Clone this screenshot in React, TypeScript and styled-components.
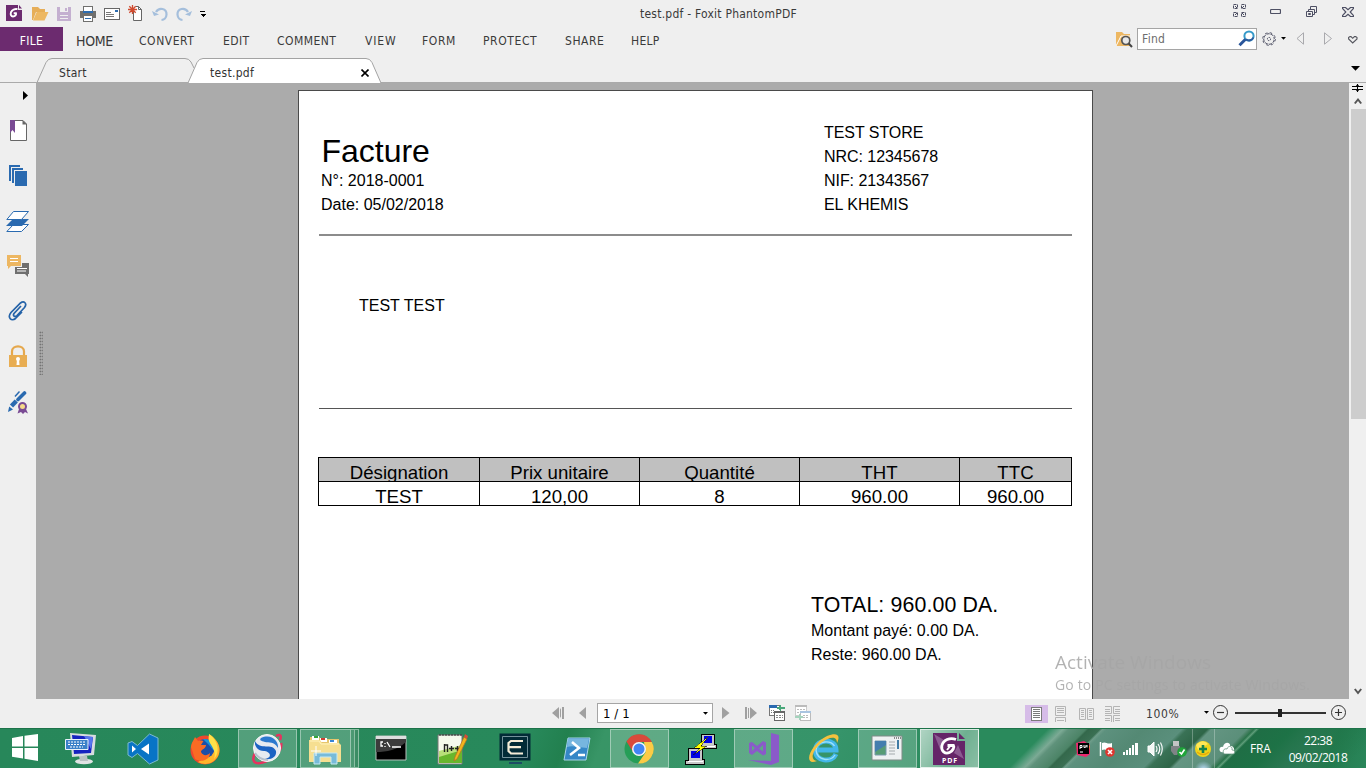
import React from 'react';
import styled, { createGlobalStyle, css } from 'styled-components';

const Global = createGlobalStyle`
  * { box-sizing: border-box; }
  html, body { margin: 0; padding: 0; overflow: hidden; }
  body { background: #efefef; }
`;

const uiFont = `"DejaVu Sans Condensed", "DejaVu Sans", sans-serif`;
const sysFont = `"Open Sans", "Noto Sans", sans-serif`;

const Window = styled.div`
  width: 1366px;
  height: 768px;
  display: flex;
  flex-direction: column;
  background: #efefef;
  font-family: ${uiFont};
  font-size: 12px;
  color: #3a3a3a;
  overflow: hidden;
`;

const Svg = styled.svg<{ $ml?: number; $mt?: number }>`
  display: block;
  flex: none;
  margin-left: ${p => p.$ml ?? 0}px;
  margin-top: ${p => p.$mt ?? 0}px;
`;

type IconProps = { w: number; h: number; ml?: number; mt?: number; crisp?: boolean; children: React.ReactNode };
const Icon = ({ w, h, ml, mt, crisp, children }: IconProps) => (
  <Svg width={w} height={h} viewBox={`0 0 ${w} ${h}`} $ml={ml} $mt={mt} fill="none"
    shapeRendering={crisp ? 'crispEdges' : undefined}>{children}</Svg>
);

/* ---------- title bar ---------- */

const TitleBar = styled.header`
  height: 27px;
  flex: none;
  display: flex;
  align-items: flex-start;
`;
const QuickTools = styled.div`
  width: 640px;
  display: flex;
  padding: 5px 0 0 6px;
`;
const Title = styled.div`
  width: 593px;
  line-height: 28px;
  letter-spacing: 0.23px;
  white-space: nowrap;
`;
const WindowButtons = styled.div`
  display: flex;
  padding-top: 4px;
`;

/* ---------- menu ---------- */

const MenuBar = styled.nav`
  height: 27px;
  flex: none;
  display: flex;
  align-items: flex-start;
`;
const FileTab = styled.div`
  width: 63px;
  height: 24px;
  background: #6c2b6f;
  color: #fff;
  text-align: center;
  line-height: 28px;
  letter-spacing: 0.3px;
`;
const MenuItem = styled.div<{ $gap: number; $w: number; $big?: boolean; $ls?: number }>`
  margin-left: ${p => p.$gap}px;
  width: ${p => p.$w}px;
  line-height: 28px;
  font-size: ${p => (p.$big ? 14 : 12)}px;
  letter-spacing: ${p => p.$ls ?? 0}px;
  white-space: nowrap;
`;
const SearchTools = styled.div`
  margin-left: auto;
  display: flex;
  width: 252px;
`;
const FindBox = styled.div`
  margin: 1px 0 0 4px;
  width: 120px;
  height: 22px;
  border: 1px solid #a5a5a5;
  background: #fff;
  display: flex;
  align-items: flex-start;
  padding-left: 4px;
  line-height: 20px;
  color: #6d6d6d;
  letter-spacing: 0.3px;
  justify-content: space-between;
`;

/* ---------- document tabs ---------- */

const TabStrip = styled.div`
  height: 29px;
  flex: none;
  display: flex;
  border-bottom: 1px solid #aaa;
  padding-left: 37px;
`;
const TabShape = styled.div<{ $w: number; $overlap?: boolean }>`
  position: relative;
  width: ${p => p.$w}px;
  height: 29px;
  margin-left: ${p => (p.$overlap ? -6 : 0)}px;
  flex: none;
  line-height: 38px;
  padding-left: 22px;
  color: #333;
  display: flex;
  z-index: ${p => (p.$overlap ? 1 : 0)};
  letter-spacing: 0.3px;
`;
const TabOutline = styled.svg`
  position: absolute;
  left: 0;
  top: 0;
`;
const TabText = styled.span`
  position: relative;
  flex: none;
  width: 47px;
`;
const CloseMark = styled.div`
  position: relative;
`;
const TabMenu = styled.div`
  margin: 12px 6px 0 auto;
`;

/* ---------- body ---------- */

const Body = styled.main`
  height: 616px;
  flex: none;
  display: flex;
`;
const Sidebar = styled.aside`
  width: 36px;
  display: flex;
  flex-direction: column;
`;
const Canvas = styled.section`
  width: 1313px;
  background: #ababab;
  display: flex;
  padding-left: 3px;
  overflow: hidden;
`;
const Grip = styled.div`
  width: 4px;
  height: 44px;
  margin: 248px 255px 0 0;
  background-image: radial-gradient(#6a6a6a 0.8px, transparent 0.9px);
  background-size: 2.6px 3px;
`;
const Sheet = styled.article`
  width: 795px;
  height: 620px;
  margin-top: 7px;
  background: #fff;
  border: 1px solid #4a4a4a;
  border-bottom: 0;
  padding: 0 20px 0 20px;
  font-family: "Liberation Sans", Arial, sans-serif;
  font-size: 16px;
  line-height: 24px;
  color: #000;
`;
const SheetHead = styled.div`
  height: 145px;
  border-bottom: 2px solid #8c8c8c;
  display: flex;
  justify-content: space-between;
  padding: 30px 0 0 2px;
`;
const Heading = styled.h1`
  margin: 12px 0 -1px 0.4px;
  font-size: 32px;
  font-weight: 400;
  line-height: 37px;
`;
const Store = styled.div`
  width: 248px;
  letter-spacing: -0.05px;
`;
const Client = styled.div`
  height: 173px;
  border-bottom: 1px solid #555;
  padding: 58px 0 0 40px;
`;
const Invoice = styled.div`
  margin-top: 48px;
  display: grid;
  grid-template-columns: 161px 160px 160px 160px 112px;
  width: 754px;
  border: 1px solid #000;
  border-right: 0;
  border-bottom: 0;
  margin-left: -1px;
`;
const Cell = styled.div<{ $head?: boolean }>`
  height: 24px;
  border-right: 1px solid #000;
  border-bottom: 1px solid #000;
  background: ${p => (p.$head ? '#c0c0c0' : '#fff')};
  font-size: 18.67px;
  line-height: 29px;
  text-align: center;
`;
const Totals = styled.div`
  margin: 86px 0 0 492px;
`;
const Total = styled.div`
  font-size: 21.33px;
  line-height: 27px;
  letter-spacing: 0.12px;
`;
const ScrollBar = styled.div`
  width: 17px;
  display: flex;
  flex-direction: column;
  align-items: center;
  background: #f0f0f0;
`;
const Thumb = styled.div`
  width: 15px;
  height: 310px;
  background: #cdcdcd;
  margin: 4px 0 auto 1px;
`;
const Watermark = styled.div`
  position: absolute;
  left: 1055px;
  top: 649px;
  font-family: ${sysFont};
  color: transparent;
  background: linear-gradient(90deg, #b2b2b2 37px, #a6a6a6 37px);
  background-clip: text;
  -webkit-background-clip: text;
  font-size: 14px;
  line-height: 18px;
  letter-spacing: 0.15px;
  white-space: nowrap;
`;
const WatermarkTitle = styled.div`
  font-size: 19px;
  line-height: 27px;
  letter-spacing: 0;
`;

/* ---------- status bar ---------- */

const StatusBar = styled.footer`
  height: 29px;
  flex: none;
  display: flex;
  padding-left: 552px;
`;
const PageBox = styled.div`
  width: 116px;
  height: 20px;
  margin: 4px 0 0 11px;
  border: 1px solid #a5a5a5;
  background: #fff;
  display: flex;
  justify-content: space-between;
  padding: 0 4px 0 5px;
  line-height: 19px;
  font-size: 13px;
  letter-spacing: 0.1px;
  color: #000;
`;
const ViewButton = styled.div<{ $on?: boolean; $ml: number }>`
  width: ${p => (p.$on ? 23 : 16)}px;
  height: 18px;
  margin: 6px 0 0 ${p => p.$ml}px;
  background: ${p => (p.$on ? '#d6bce8' : 'transparent')};
  display: flex;
  justify-content: center;
`;
const Zoom = styled.div`
  margin-left: 26px;
  width: 57px;
  line-height: 30px;
  letter-spacing: 0.6px;
`;

/* ---------- taskbar ---------- */

const Taskbar = styled.div`
  height: 40px;
  flex: none;
  display: flex;
  align-items: stretch;
  color: #fff;
  font-family: ${sysFont};
  border-top: 1px solid #1d7349;
  background:
    linear-gradient(135deg, transparent 0 62px, #4f9a78 67px, #7caa95 73px, #5f927b 77px, #4c8467 89px, #34684b 91px, #3a6f53 99px, #6d9c89 101px, #5d917e 104px, #548974 130px, #5a8f7c 157px, #3a7256 161px, #2e6547 175px, #649582 178px, #5b8f7a 203px, #3f7d5c 206px, #2a744b 208px, #5c9c78 210px, #1f6e45 212px, #1d7246 235px, #27835700 300px) 960px 0 / 406px 40px no-repeat,
    linear-gradient(110deg, #27875a 0, #28895b 500px, #22804f 535px, #389566 570px, #36946a 790px, #2a8a5c 910px, #2a8a5c 1080px, #46836b 1090px, #46836b 1220px, #247c4f 1260px, #2a865a 100%);
`;
const Start = styled.div`
  width: 50px;
  padding: 5px 0 0 12px;
`;
const TaskSlot = styled.div`
  width: 62px;
  padding: 0 1.5px;
`;
const TaskButton = styled.div<{ $state?: 'open' | 'active'; $stack?: boolean }>`
  height: 39px;
  width: ${p => (p.$stack ? 51 : 59)}px;
  display: flex;
  justify-content: center;
  align-items: center;
  border: 1px solid transparent;
  ${p => p.$state && css`
    background: ${p.$state === 'active' ? 'linear-gradient(120deg, rgba(255,255,255,.62), rgba(255,255,255,.32) 60%, rgba(255,255,255,.45))' : 'rgba(255, 255, 255, 0.2)'};
    border-color: rgba(255, 255, 255, ${p.$state === 'active' ? 0.7 : 0.4});
  `}
  ${p => p.$stack && css`
    box-shadow: 4px 0 0 -1px #4b9872, 4px 0 0 0 #8abea3, 8px 0 0 -1px #3b8c64, 8px 0 0 0 #8abea3;
  `}
`;
const Tray = styled.div`
  margin-left: auto;
  width: 291px;
  display: flex;
  align-items: flex-start;
`;
const TraySeparated = styled.div`
  width: 23px;
  height: 39px;
  margin-left: 5px;
  padding: 13px 0 0 2px;
  border-left: 1px solid rgba(255, 255, 255, 0.28);
  border-right: 1px solid rgba(255, 255, 255, 0.28);
  background: radial-gradient(circle at 50% 105%, #c4e0ff 0, rgba(170, 205, 230, 0.4) 6px, transparent 9px);
`;
const Lang = styled.div`
  margin-left: 15px;
  width: 34px;
  font-size: 12px;
  line-height: 40px;
  letter-spacing: -0.2px;
`;
const Clock = styled.div`
  width: 68px;
  text-align: center;
  font-size: 12px;
  line-height: 17px;
  letter-spacing: -0.5px;
  padding-top: 3px;
`;

const Down = ({ ml = 0, mt = 0, w = 5 }: { ml?: number; mt?: number; w?: number }) => (
  <Icon w={w} h={Math.ceil(w / 2)} ml={ml} mt={mt}><path d={`M0 0H${w}L${w / 2} ${w / 2 + 0.3}Z`} fill="#000" /></Icon>
);

const QuickAccess = () => (
  <QuickTools>
    <Icon w={17} h={17}>
      <path d="M0 0H12V5H16V16H0Z" fill="#6c2b6f" /><path d="M13 0L16 3.5H13Z" fill="#6c2b6f" />
      <path d="M11.5 4.2C9 3.6 6 4.8 5 7.2C4.2 9.5 5 11.5 7 11.5C9.3 11.5 10.4 9.6 10 8.2H7.7" stroke="#fff" strokeWidth="1.9" />
    </Icon>
    <Icon w={17} h={16} ml={9} mt={1}>
      <path d="M0 1H6L8 3H13V6H4L1 14H0Z" fill="#e6ae58" /><path d="M4.7 6H16.5L12.5 14.5H1Z" fill="#edb863" />
    </Icon>
    <Icon w={14} h={15} ml={8} mt={2} crisp>
      <path d="M0 0H14V14H0Z" fill="#c4b0d0" /><path d="M3 0H11V5H3Z" fill="#efefef" /><path d="M8 1H10V4H8ZM3 8H11V13H3Z" fill="#c4b0d0" />
      <path d="M3 8H11V9H3ZM3 11H11V12H3Z" fill="#efefef" />
    </Icon>
    <Icon w={16} h={16} ml={9} mt={1} crisp>
      <path d="M3 0H13V5H3Z" fill="#70706e" /><path d="M4 1H12V5H4Z" fill="#fff" /><path d="M0 5H16V12H0Z" fill="#70706e" />
      <path d="M3 5H13V7H3Z" fill="#2d6db0" /><path d="M3 10H13V16H3Z" fill="#70706e" /><path d="M4 10H12V15H4Z" fill="#fff" /><path d="M5 12H11V13H5Z" fill="#2d6db0" />
    </Icon>
    <Icon w={16} h={14} ml={8} mt={2} crisp>
      <path d="M.5 1.5H15.5V12.5H.5Z" fill="#fff" stroke="#666" /><path d="M2 5H7M2 7.5H10M2 9.5H10" stroke="#777" /><path d="M11 3H14V5H11Z" fill="#2d6db0" />
    </Icon>
    <Icon w={15} h={16} ml={8} mt={0}>
      <path d="M5.5 4.5V15.5H13.5V4.5L10.5 1.5H8" fill="#fff" stroke="#666" /><path d="M10.5 1.5V4.5H13.5" stroke="#666" />
      <path d="M4.5 0V9M0 4.5H9M1.3 1.3L7.7 7.7M7.7 1.3L1.3 7.7" stroke="#d04a2e" strokeWidth="1.3" />
    </Icon>
    <Icon w={16} h={16} ml={9} mt={1}>
      <path d="M4 6C7 .8 14.8 2.3 14.5 8.5C14.4 11.8 12 13.8 9.5 14" stroke="#a5bfdc" strokeWidth="2.2" /><path d="M0 5L7 8.5L2 10Z" fill="#a5bfdc" />
    </Icon>
    <Icon w={16} h={16} ml={8} mt={1}>
      <path d="M12 6C9 .8 1.2 2.3 1.5 8.5C1.6 11.8 4 13.8 6.5 14" stroke="#a5bfdc" strokeWidth="2.2" /><path d="M16 5L9 8.5L14 10Z" fill="#a5bfdc" />
    </Icon>
    <Icon w={6} h={6} ml={8} mt={6} crisp><path d="M0 0H5V1H0ZM0 3H6L3 6Z" fill="#000" /></Icon>
  </QuickTools>
);

const ink = '#4e5064';

const Controls = () => (
  <WindowButtons>
    <Icon w={14} h={14}>
      {[[0, 0], [8, 0], [0, 8], [8, 8]].map(([x, y]) => <path key={`${x}${y}`} d={`M${x + .5} ${y + .5}h4v4h-4z`} stroke={ink} strokeDasharray="3 1" />)}
      <path d="M2 2L4 4M11 2L9 4M2 11L4 9M11 11L9 9" stroke={ink} />
    </Icon>
    <Icon w={11} h={5} ml={23} mt={5}><rect x=".5" y=".5" width="10" height="4" rx="1" stroke={ink} strokeWidth="1.2" /></Icon>
    <Icon w={12} h={12} ml={25} mt={2}>
      <path d="M.5 5.5H6.5V10.5H.5ZM2.5 7.5H4.5V8.5H2.5ZM2.5 5V3.5H8.5V8.5H7M4.5 3V.5H10.5V6.5H9" stroke={ink} />
    </Icon>
    <Icon w={12} h={10} ml={24} mt={3}>
      <path d="M.5 .5H3.5L6 2.7L8.5 .5H11.5V1.5L8.2 5L11.5 8.5V9.5H8.5L6 7.3L3.5 9.5H.5V8.5L3.8 5L.5 1.5Z" stroke={ink} strokeWidth="1.2" />
    </Icon>
  </WindowButtons>
);

const menu: [string, number, number, boolean?, number?][] = [
  ['HOME', 13, 37, true, -0.3], ['CONVERT', 26, 55, false, 0.55], ['EDIT', 29, 26, false, 0.4], ['COMMENT', 28, 60, false, 0.45],
  ['VIEW', 28, 31, false, 0.85], ['FORM', 26, 34, false, 0.6], ['PROTECT', 27, 54, false, 0.6], ['SHARE', 28, 39, false, 0.55], ['HELP', 27, 28, false, 0.3],
];

const Menu = () => (
  <MenuBar>
    <FileTab>FILE</FileTab>
    {menu.map(([t, gap, w, big, ls]) => <MenuItem key={t} $gap={gap} $w={w} $big={big} $ls={ls}>{t}</MenuItem>)}
    <SearchTools>
      <Icon w={17} h={16} ml={2} mt={5}>
        <path d="M0 0H6L8 2H14V14H0Z" fill="#edb762" /><path d="M0 14L5 4H14" stroke="#fff" strokeWidth="1" />
        <circle cx="9.8" cy="8.5" r="4" fill="#e8e8e8" stroke="#555" strokeWidth="1.7" /><path d="M12.7 11.5L16 15" stroke="#444" strokeWidth="2" />
      </Icon>
      <FindBox>
        Find
        <Icon w={18} h={17} mt={1}>
          <circle cx="11" cy="6" r="4.6" stroke="#359ac9" strokeWidth="2" /><path d="M15.3 7.5A4.6 4.6 0 0 1 8 9.3" stroke="#2c5a9c" strokeWidth="2" /><path d="M7.5 9.3L1.5 15.2" stroke="#29559a" strokeWidth="3" />
        </Icon>
      </FindBox>
      <Icon w={14} h={14} ml={5} mt={5}>
        <circle cx="7" cy="7" r="5.3" stroke={ink} /><circle cx="7" cy="7" r="6.3" stroke={ink} strokeDasharray="2.5 2.45" /><circle cx="7" cy="7" r="5.3" stroke="#efefef" strokeWidth="1.4" strokeDasharray="1 3.16" /><circle cx="7" cy="7" r="1.6" stroke={ink} strokeDasharray="1.5 .7" />
      </Icon>
      <Down ml={5} mt={10} />
      <Icon w={9} h={13} ml={10} mt={5}><path d="M7.5 .8V12.2L1 6.5Z" stroke="#a9a9ad" /></Icon>
      <Icon w={9} h={13} ml={19} mt={5}><path d="M.5 .8V12.2L7.5 6.5Z" stroke="#a9a9ad" /></Icon>
      <Icon w={10} h={8} ml={15} mt={9}><path d="M.6 1.5L2 .6H3L4.7 2.3L6.4 .6H7.7L9 1.6V3L4.7 7L.6 3Z" stroke="#55565e" strokeWidth="1.1" /></Icon>
    </SearchTools>
  </MenuBar>
);

const Tabs = () => (
  <TabStrip>
    <TabShape $w={157}>
      <TabOutline width="160" height="29" fill="none"><path d="M0 28.5L9 8.5Q11 4.5 15 4.5H148Q152 4.5 154 8L157 14" stroke="#a3a3a3" /></TabOutline>
      <TabText>Start</TabText>
    </TabShape>
    <TabShape $w={194} $overlap>
      <TabOutline width="194" height="29" fill="none"><path d="M0 29L9 8.5Q11 4.5 15 4.5H178Q182 4.5 184 8.5L193 29" fill="#fff" stroke="#a3a3a3" /></TabOutline>
      <TabText>test.pdf</TabText>
      <CloseMark><Icon w={8} h={8} ml={104} mt={15}><path d="M.5 .5L7.5 7.5M7.5 .5L.5 7.5" stroke="#000" strokeWidth="1.6" /></Icon></CloseMark>
    </TabShape>
    <TabMenu><Down w={9} /></TabMenu>
  </TabStrip>
);

const blue = '#2a6ab0';

const Side = () => (
  <Sidebar>
    <Icon w={5} h={9} ml={23} mt={8}><path d="M0 0L5 4.5L0 9Z" fill="#000" /></Icon>
    <Icon w={18} h={22} ml={9} mt={19}>
      <path d="M1.5 1.5H14L17.5 5V21.5H1.5Z" fill="#fff" stroke="#666" /><path d="M13.5 1V5.5H18Z" fill="#666" /><path d="M1 1H6V14L3.5 11L1 14Z" fill="#7a4b94" />
    </Icon>
    <Icon w={20} h={22} ml={8} mt={24} crisp>
      <path d="M1 0H12V2H3V16H1Z" fill={blue} /><path d="M4 3H15V5H6V18H4Z" fill={blue} /><path d="M7 6H19V21H7Z" fill={blue} />
    </Icon>
    <Icon w={24} h={22} ml={6} mt={24}>
      <path d="M7.5 13.5H22.5L15.5 20.5H.8Z" fill="#fff" stroke={blue} /><path d="M7 8H23L16 15H0Z" fill={blue} /><path d="M7.5 .5H22.5L15.5 8.5H.8Z" fill="#fff" stroke={blue} />
    </Icon>
    <Icon w={23} h={23} ml={7} mt={21}>
      <path d="M0 1H14V12H4L1 15V12H0Z" fill="#edb762" /><path d="M3 4.5H11M3 7.5H11" stroke="#fff" /><path d="M15 9H22V20H21V23L18 20H8V13H15Z" fill="#6f6f6f" /><path d="M10 14.5H20M10 17H19" stroke="#fff" />
    </Icon>
    <Icon w={22} h={22} ml={7} mt={23}>
      <path d="M14 6L7 13.5C5.5 16 8 17.5 10 15.5L17.5 7.5C20.5 3.5 17 .3 13.5 3L4 12.5C0 17.5 4.5 22 8.5 18.5L15 12" stroke="#2563a8" strokeWidth="1.7" />
    </Icon>
    <Icon w={18} h={23} ml={9} mt={23}>
      <path d="M3 11V6.5C3 -.4 15 -.4 15 6.5V11" stroke="#e5a84d" strokeWidth="2.2" /><path d="M0 10H18V22H0Z" fill="#e8ad52" /><circle cx="9" cy="14" r="2" fill="#fff" /><path d="M8 14H10L10.5 20H7.5Z" fill="#fff" />
    </Icon>
    <Icon w={22} h={23} ml={7} mt={23}>
      <path d="M17.5 2L11 8.5" stroke={blue} strokeWidth="3.6" strokeLinecap="round" /><path d="M12.5 .5L8 5.5" stroke={blue} strokeWidth="1.5" /><path d="M9.3 10L4.5 15" stroke={blue} strokeWidth="4.4" /><path d="M1 21L2.2 15.5L6 18.5Z" fill={blue} />
      <path d="M12 18L10.5 22.5L14 21L16 23L18 21L21 22.5L19 18" fill="#7a4b94" /><circle cx="15.5" cy="15.5" r="3.5" fill="#f6da89" stroke="#7a4b94" strokeWidth="2" />
    </Icon>
  </Sidebar>
);

const rows = [['Désignation', 'Prix unitaire', 'Quantité', 'THT', 'TTC'], ['TEST', '120,00', '8', '960.00', '960.00']];

const Document = () => (
  <Sheet>
    <SheetHead>
      <div><Heading>Facture</Heading><div>N°: 2018-0001</div><div>Date: 05/02/2018</div></div>
      <Store><div>TEST STORE</div><div>NRC: 12345678</div><div>NIF: 21343567</div><div>EL KHEMIS</div></Store>
    </SheetHead>
    <Client><div>TEST TEST</div></Client>
    <Invoice>{rows.map((r, i) => r.map((c, j) => <Cell key={`${i}-${j}`} $head={i === 0}>{c}</Cell>))}</Invoice>
    <Totals><Total>TOTAL: 960.00 DA.</Total><div>Montant payé: 0.00 DA.</div><div>Reste: 960.00 DA.</div></Totals>
  </Sheet>
);

const PageLines = ({ x, y, w, h, c = '#b5b5b5' }: { x: number; y: number; w: number; h: number; c?: string }) => (
  <g stroke={c}><path d={`M${x + .5} ${y + .5}h${w - 1}v${h - 1}h${1 - w}z`} />
    {Array.from({ length: Math.floor((h - 3) / 2) }, (_, i) => <path key={i} d={`M${x + 2} ${y + 2.5 + i * 2}h${w - 4}`} />)}</g>
);

const Status = () => (
  <StatusBar>
    <Icon w={12} h={13} mt={8}><path d="M7 0V12L0 6ZM8 2.5L9 1V11L8 9.5ZM10 0H12V12H10Z" fill="#a0a0a0" /></Icon>
    <Icon w={7} h={13} ml={15} mt={8}><path d="M7 0V12L0 6Z" fill="#a0a0a0" /></Icon>
    <PageBox>1 / 1<Down mt={8} /></PageBox>
    <Icon w={8} h={13} ml={9} mt={8}><path d="M0 0V12L7.5 6Z" fill="#a0a0a0" /></Icon>
    <Icon w={12} h={13} ml={15} mt={8}><path d="M5 0V12L12 6ZM0 0H2V12H0ZM3 1H4V11H3Z" fill="#a0a0a0" /></Icon>
    <Icon w={17} h={17} ml={12} mt={6} crisp>
      <path d="M.5 .5H11.5V10.5H.5Z" fill="#fff" stroke="#777" /><path d="M0 0H8V3H0Z" fill={blue} /><path d="M2 5.5H6M2 7.5H6" stroke="#777" strokeDasharray="1 1" />
      <path d="M5.5 6.5H15.5V15.5H5.5Z" fill="#fff" stroke="#666" /><path d="M5 6H16V8H5Z" fill="#666" /><path d="M7 10.5H14M7 12.5H14" stroke="#888" strokeDasharray="2 1" />
      <path d="M10 2H16V4H10Z" fill="#49a77a" /><path d="M7.5 3L12 0V6Z" fill="#49a77a" />
    </Icon>
    <Icon w={17} h={17} ml={9} mt={6} crisp>
      <path d="M.5 .5H11.5V10.5H.5Z" fill="#fff" stroke="#ccc" /><path d="M0 0H12V2H0Z" fill="#bbb" /><path d="M2 4.5H10M2 7.5H6" stroke="#bbb" strokeDasharray="2 1" />
      <path d="M5.5 6.5H15.5V15.5H5.5Z" fill="#fff" stroke="#bbb" /><path d="M5 6H16V8H5Z" fill="#a9c4e0" /><path d="M8 10.5H14M8 12.5H14" stroke="#bbb" strokeDasharray="2 1" />
      <path d="M0 11H5V13H0Z" fill="#a5d3bd" /><path d="M8.5 12L4 9V15Z" fill="#a5d3bd" />
    </Icon>
    <ViewButton $on $ml={213}><Icon w={11} h={14} mt={2} crisp><path d="M0 0H11V14H0Z" fill="#fff" /><PageLines x={0} y={0} w={11} h={14} c="#7a7a7a" /></Icon></ViewButton>
    <ViewButton $ml={4}><Icon w={11} h={18}><PageLines x={0} y={1} w={11} h={10} /><path d="M.5 17V12.5H10.5V17M2 15.5H9" stroke="#b5b5b5" /></Icon></ViewButton>
    <ViewButton $ml={10}><Icon w={15} h={18}><PageLines x={0} y={3} w={7} h={12} /><PageLines x={8} y={3} w={7} h={12} /></Icon></ViewButton>
    <ViewButton $ml={10}><Icon w={15} h={18}><path d="M0 1.5H6.5V8.5H0M15 1.5H8.5V8.5H15M0 10.5H6.5V17M15 10.5H8.5V17M0 4.5H5M0 6.5H5M10 4.5H15M10 6.5H15M0 13.5H5M10 13.5H15M0 15.5H5M10 15.5H15" stroke="#b5b5b5" /></Icon></ViewButton>
    <Zoom>100%</Zoom>
    <Down mt={12} ml={1} />
    <Icon w={16} h={16} ml={4} mt={6}><circle cx="7.5" cy="7.5" r="7" stroke="#333" /><path d="M4 7.5H11" stroke="#333" strokeWidth="1.2" /></Icon>
    <Icon w={91} h={9} ml={6} mt={10} crisp><path d="M0 4H91" stroke="#333" strokeWidth="2" /><path d="M43 0H47V8H43Z" fill="#222" /></Icon>
    <Icon w={16} h={16} ml={5} mt={6}><circle cx="7.5" cy="7.5" r="7" stroke="#333" /><path d="M4 7.5H11M7.5 4V11" stroke="#333" strokeWidth="1.2" /></Icon>
  </StatusBar>
);

const SmallText = styled.text`
  font-family: ${sysFont};
  font-weight: 700;
`;

const MonitorIcon = () => (
  <Icon w={32} h={32}>
    <ellipse cx="19" cy="28.5" rx="9" ry="2.8" fill="#dfe3e3" /><path d="M14 23H22L23 28H15Z" fill="#b9c1c3" />
    <path d="M5 0L31 2L29 22L7 24Z" fill="#d7dcdf" /><path d="M7 2L28 4L26 20L9 21Z" fill="#1522c0" /><path d="M19 3L28 4L26 16Z" fill="#5677ee" />
    <path d="M.5 6.5H23V16.5H.5Z" fill="#3b80c8" stroke="#e9f2fa" /><path d="M3 9H21M3 11.5H21M5 14H18" stroke="#fff" strokeDasharray="2 1" />
  </Icon>
);
const CodeIcon = () => (
  <Icon w={32} h={32}>
    <path d="M22.5 1L31 5V27L22.5 31L10.5 20.5L5 24.5L1 22V10L5 8.5L10.5 12.5Z" fill="#0874c5" stroke="#7cbad0" /><path d="M22 10.5V21.5L14 16ZM5 12.5L9 16L5 19.5Z" fill="#fff" />
  </Icon>
);
const FirefoxIcon = () => (
  <Icon w={32} h={32}>
    <circle cx="16" cy="17" r="14.5" fill="#f0472d" /><path d="M20 1C30 7 34 18 27 26C22 32 14 32 9 29L24 20Z" fill="#ffb52b" />
    <circle cx="16" cy="15.5" r="9.5" fill="#1c4fa8" /><path d="M14 6C22 5 27 11 25 18L20 12Z" fill="#1992d8" />
    <path d="M2 14C3 8 5 7 6 4L9 8C12 7 14 8 14.5 8L12 12H17C17 16 12 16 12 19C14 23 18 23 21 20C21 27 12 30 6 26Z" fill="#fa6b24" /><path d="M20 1C30 8 31 20 25 26C28 18 22 13 20 8C19 5 20 3 20 1Z" fill="#ffe14a" />
  </Icon>
);
const SparkIcon = () => (
  <Icon w={32} h={32}>
    <path d="M25 3C29 1 31 2 29 7M4 20C-2 32 9 34 24 23C29 18 31 13 30 10" stroke="#e6335f" strokeWidth="2.5" /><circle cx="16" cy="15" r="13.5" fill="#e7eaf0" stroke="#f7f7f7" />
    <path d="M4 8C9 18 21 9 25 18C26 24 20 27 14 26C23 24 18 18 13 18C7 18 3 13 4 8Z" fill="#1c63c3" /><path d="M10 5C20 0 28 8 27 15C23 8 18 10 14 9C10 8 8 7 10 5Z" fill="#2c79ce" /><path d="M4 20C7 25 12 27 17 27" stroke="#b5becb" strokeWidth="2" />
  </Icon>
);
const ExplorerIcon = () => (
  <Icon w={32} h={32}>
    <path d="M1 4H10L12 6H30V29H1Z" fill="#e7c66d" /><path d="M3 3H10V7H3ZM11 5H18V9H11ZM20 7H28V11H20Z" fill="#fff" /><path d="M5 3H9V5H5Z" fill="#35a53b" /><path d="M12 5H16V7H12Z" fill="#cf3e30" /><path d="M21 7H25V9H21Z" fill="#3885d5" />
    <path d="M0 7H11L13 10H30L32 12V29H0Z" fill="#f6df91" /><path d="M1 8H10L12 11H30" stroke="#fff3bd" /><path d="M5 31V20H28V31H22V24H11V31Z" fill="#78bbd9" stroke="#c6e9f3" /><path d="M7 13V23M2 18H12" stroke="#fff" />
  </Icon>
);
const TerminalIcon = () => (
  <Icon w={32} h={28} mt={-2}>
    <path d="M1 2H31V26H1Z" fill="#000" stroke="#b8c0bd" /><path d="M1 2H31V5H1Z" fill="#dedede" /><path d="M1 5H31V8C22 16 12 18 1 18Z" fill="#3c3c3c" />
    <path d="M8 8H6V12H8M10 9V10M10 12V13M12 8L15 13M17 13H26" stroke="#fff" strokeWidth="1.3" />
  </Icon>
);
const NotepadIcon = () => (
  <Icon w={32} h={32}>
    <path d="M1 2H25V31H1Z" fill="#f5f9ec" stroke="#777" /><path d="M2 18L25 12V30H2Z" fill="#b9e07a" /><path d="M2 24L25 17V30H2Z" fill="#68b62d" /><path d="M2 2H25" stroke="#333" strokeDasharray="2 1" />
    <path d="M7.5 11V19M7.5 12H10.5V19M12 15.5H17M14.5 13V18M18 15.5H23M20.5 13V18" stroke="#222" strokeWidth="1.4" /><path d="M27 4L18 24L17 28L20 26L30 6Z" fill="#f2b51d" stroke="#b66d24" strokeWidth=".7" /><path d="M28 1L31 3L30 6L27 4Z" fill="#d64d38" />
  </Icon>
);
const EIcon = () => (
  <Icon w={32} h={32}>
    <path d="M1.5 1.5H30.5V26.5H1.5Z" fill="#022b37" stroke="#022b37" strokeWidth="2" /><path d="M3.5 3.5H28.5V24.5H3.5Z" stroke="#74929b" /><path d="M24 8H12L9.5 10V18L12 20.5H24M10 14.2H22" stroke="#f4ecd7" strokeWidth="2.2" /><path d="M10 29H23V31H10Z" fill="#1d4c65" />
  </Icon>
);
const PowerShellIcon = () => (
  <Icon w={28} h={24}>
    <path d="M5 1H27L23 23H1Z" fill="#3587c7" stroke="#a7d4ea" /><path d="M5 2H26L24 11C15 10 9 8 4 10Z" fill="#77b6df" /><path d="M9 5L16 11L7 18M15 18H22" stroke="#fff" strokeWidth="2.5" />
  </Icon>
);
const ChromeIcon = () => (
  <Icon w={30} h={30}>
    <circle cx="15" cy="15" r="14.5" fill="#269e57" /><path d="M2.5 7.5A14.5 14.5 0 0 1 27.8 8H15L9 18Z" fill="#d94a3b" /><path d="M27.8 8A14.5 14.5 0 0 1 14 29.5L21.5 18.5L20 8Z" fill="#fccb46" /><circle cx="15" cy="15" r="7" fill="#f5f6f7" /><circle cx="15" cy="15" r="5.5" fill="#4285f4" />
  </Icon>
);
const PuttyIcon = () => (
  <Icon w={32} h={32} crisp>
    <path d="M16.5 1.5H29.5V11.5H31.5V15.5H13.5V12.5H16.5Z" fill="#c7c7c7" stroke="#000" /><path d="M19 3H27V10H19Z" fill="#0000e5" /><path d="M3.5 15.5H17.5V26.5H19.5V31.5H.5V27.5H3.5Z" fill="#c7c7c7" stroke="#000" /><path d="M6 18H15V25H6Z" fill="#0000e5" /><path d="M3 28.5H18M17 13.5H30" stroke="#fff" />
    <path d="M23 4L9 15H15L8 22L22 13H16Z" fill="#ff0" stroke="#111" strokeWidth=".5" />
  </Icon>
);
const StudioIcon = () => (
  <Icon w={34} h={32}>
    <path d="M25 0L33 2V29L25 32L2 27L25 28Z" fill="#8a5bc9" /><path d="M3 10L6 9L11 13L17 8L20 9.5V21L17 22.5L11 18L6 22L3 20ZM6 12.5V18L9 15ZM17 12L13 15.5L17 18.5Z" fill="#8a5bc9" fillRule="evenodd" />
  </Icon>
);
const ExplorerE = () => (
  <Icon w={32} h={32}>
    <path d="M27 21C23 30 6 29 6.5 17C7 5 27 5 27 17H9" stroke="#43b7e9" strokeWidth="5" /><path d="M26 22C22 29 8 28 7 17C8 7 22 7 25.5 13" stroke="#9ee2fb" strokeWidth="1.4" />
    <path d="M8 28C-7 34 1 11 18 3C28 -1 32 2 28 10C28 2 20 4 12 10C4 17 0 27 8 28Z" fill="#f4c13e" />
  </Icon>
);
const WindowIcon = () => (
  <Icon w={32} h={26} mt={-1}>
    <path d="M1 1H31V25H1Z" fill="#eef1f2" stroke="#7e8b87" /><path d="M4 6H15V20H4Z" fill="#579c75" stroke="#799aac" /><path d="M4 6H15V10L4 17Z" fill="#447eae" /><path d="M18 7H24M18 10H24M18 13H24M18 16H24M18 19H24" stroke="#a4aaad" /><path d="M26 5H28V14H26Z" fill="#407ba4" /><path d="M23 3H30" stroke="#222" strokeDasharray="1 1" />
  </Icon>
);
const FoxitIcon = () => (
  <Icon w={32} h={32}>
    <path d="M0 0H24V8H32V32H0Z" fill="#652568" /><path d="M26 0L32 6H26Z" fill="#652568" /><path d="M1 1L11 7L7 16ZM31 26L21 20L25 12Z" fill="#8b5a91" />
    <path d="M23 6.5C17 4 10 7 8.8 13C8 18 12 21.5 16.5 19.5C20 18 21.5 14 20.5 12.5H14.5" stroke="#fff" strokeWidth="2.8" /><path d="M18 12L14 17" stroke="#fff" strokeWidth="2" />
    <SmallText x="9" y="30" fontSize="7" fill="#fff" textLength="15">PDF</SmallText>
  </Icon>
);

const apps: { icon: React.ReactNode; state?: 'open' | 'active'; stack?: boolean }[] = [
  { icon: <MonitorIcon /> }, { icon: <CodeIcon /> }, { icon: <FirefoxIcon /> }, { icon: <SparkIcon />, state: 'open' },
  { icon: <ExplorerIcon />, state: 'open', stack: true }, { icon: <TerminalIcon /> }, { icon: <NotepadIcon /> }, { icon: <EIcon /> },
  { icon: <PowerShellIcon /> }, { icon: <ChromeIcon />, state: 'open' }, { icon: <PuttyIcon /> }, { icon: <StudioIcon />, state: 'open' },
  { icon: <ExplorerE /> }, { icon: <WindowIcon />, state: 'open' }, { icon: <FoxitIcon />, state: 'active' },
];

const SystemTray = () => (
  <Tray>
    <Icon w={16} h={16} mt={12}>
      <path d="M1 2L9 0L15 4V13L11 16L2 14Z" fill="#ee276e" /><path d="M11 3L15 5L13 13Z" fill="#f4a437" /><path d="M3 2H14V13H3Z" fill="#000" /><path d="M5 8V4.5H7V6.5H5M9 4V6.5L11 6V4M12 4V6.5M5 11H8" stroke="#fff" strokeWidth="1" />
    </Icon>
    <Icon w={17} h={16} ml={8} mt={12}>
      <path d="M1.5 1V15" stroke="#fff" strokeWidth="1.5" /><path d="M3 2C7 0 8 4 13 2V9C8 11 7 7 3 9Z" fill="#fff" /><circle cx="11" cy="11" r="4.8" fill="#e0362f" /><path d="M9 9L13 13M13 9L9 13" stroke="#fff" strokeWidth="1.6" />
    </Icon>
    <Icon w={16} h={14} ml={7} mt={13} crisp><path d="M0 10H2V13H0ZM3 8H5V13H3ZM6 6H8V13H6ZM9 3H11V13H9ZM12 1H15V13H12Z" fill="#fff" /></Icon>
    <Icon w={16} h={16} ml={8} mt={12}><path d="M1 5H3L7 1V15L3 11H1Z" fill="#f4f7f5" stroke="#fff" /><path d="M9 5Q11 8 9 11M11 3Q14.5 8 11 13M13.5 1.5Q17 8 13.5 14.5" stroke="#fff" strokeWidth="1.1" /></Icon>
    <Icon w={17} h={16} ml={7} mt={12}><path d="M3 0H9V5H3Z" fill="#c4c4c4" /><path d="M1 5H10V10L7 14H4L1 10Z" fill="#808386" /><circle cx="12" cy="11" r="4.8" fill="#20a53a" /><path d="M9.5 11L11.5 13L14.5 8.5" stroke="#fff" strokeWidth="1.6" /></Icon>
    <TraySeparated>
      <Icon w={16} h={16} mt={-1}><circle cx="8" cy="8" r="8" fill="#eed51b" /><path d="M1 4Q8 -3 13 3L3 9Z" fill="#ffe757" /><path d="M8 4V12M4 8H12" stroke="#16834c" strokeWidth="2.6" /><path d="M2 11Q8 16 14 11" stroke="#e7a90c" strokeWidth="1.5" /></Icon>
    </TraySeparated>
    <Icon w={16} h={13} ml={4} mt={13}><path d="M2 10C-1 8 1 4 4 5C5 -1 12 0 11 4C15 3 17 9 13 11H7" fill="#fff" /><path d="M5 12C3 9 5 6 8 7C9 3 14 4 13 8C17 8 16 12 14 12Z" fill="#fff" stroke="#568b73" strokeWidth=".7" /></Icon>
    <Lang>FRA</Lang>
    <Clock>22:38<br />09/02/2018</Clock>
  </Tray>
);

export default function App() {
  return (
    <Window>
      <Global />
      <TitleBar><QuickAccess /><Title>test.pdf - Foxit PhantomPDF</Title><Controls /></TitleBar>
      <Menu />
      <Tabs />
      <Body>
        <Side />
        <Canvas><Grip /><Document /></Canvas>
        <ScrollBar>
          <Icon w={11} h={8} mt={1}><path d="M0 2.5H11M0 5.5H11" stroke="#000" /><path d="M5.5 0V8" stroke="#000" /><path d="M3.5 2.5L5.5 0L7.5 2.5M3.5 5.5L5.5 8L7.5 5.5" fill="#000" /></Icon>
          <Icon w={8} h={8} mt={5}><path d="M.8 6.5L4 2.5L7.2 6.5" stroke="#555" strokeWidth="2" /></Icon>
          <Thumb />
          <Icon w={8} h={14}><path d="M.8 4L4 8L7.2 4" stroke="#555" strokeWidth="2" /></Icon>
        </ScrollBar>
      </Body>
      <Watermark><WatermarkTitle>Activate Windows</WatermarkTitle>Go to PC settings to activate Windows.</Watermark>
      <Status />
      <Taskbar>
        <Start><Icon w={27} h={27}><path d="M0 4L11 2V12.5H0ZM12.5 1.8L26 0V12.5H12.5ZM0 14H11V24.5L0 22.7ZM12.5 14H26V27L12.5 24.8Z" fill="#fff" /></Icon></Start>
        {apps.map((a, i) => <TaskSlot key={i}><TaskButton $state={a.state} $stack={a.stack}>{a.icon}</TaskButton></TaskSlot>)}
        <SystemTray />
      </Taskbar>
    </Window>
  );
}
